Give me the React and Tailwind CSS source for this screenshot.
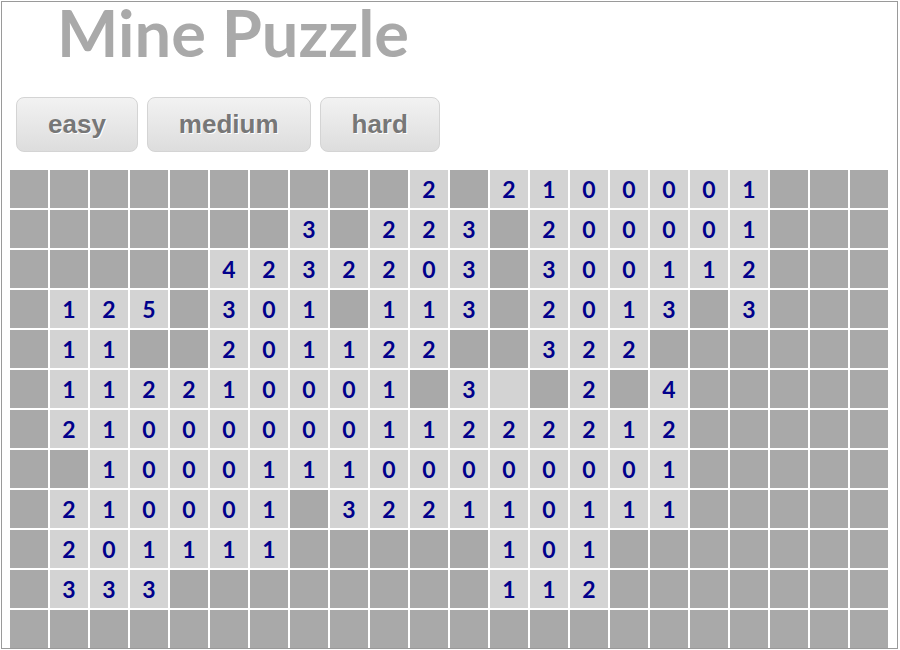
import React from "react";

// '#' = unopened (dark), '.' = opened blank, digit = opened with count
const board = [
  "##########2#2100001###",
  "#######3#223#200001###",
  "#####4232203#300112###",
  "#125#301#113#2013#3###",
  "#11##201122##322######",
  "#112210001#3.#2#4#####",
  "#2100000011222212#####",
  "##100011100000001#####",
  "#210001#322110111#####",
  "#201111#####101#######",
  "#333########112#######",
  "######################",
];

const levels = ["easy", "medium", "hard"];

function Cell({ v }) {
  if (v === "#") {
    return <div className="w-[38px] h-[38px] bg-[#a9a9a9]" />;
  }
  return (
    <div className="w-[38px] h-[38px] bg-[#d3d3d3] flex items-center justify-center text-[23px] font-bold text-[#00008b] leading-none">
      {v === "." ? "" : v}
    </div>
  );
}

export default function App() {
  return (
    <div className="w-[900px] h-[650px] bg-white overflow-hidden font-['Lato',sans-serif]">
      <div className="ml-px mt-px w-[897px] h-[648px] border border-[#9a9a9a] overflow-hidden">
        <h1 className="pl-[55px] text-[65px] leading-[60px] font-bold text-[#a9a9a9]">
          Mine Puzzle
        </h1>

        <div className="flex gap-[9px] ml-[14px] mt-[35px]">
          {levels.map((l) => (
            <button
              key={l}
              className="h-[55px] px-[31px] rounded-[8px] border border-[#d4d4d4] bg-linear-to-b from-[#f2f2f2] to-[#dddddd] text-[26px] font-bold text-[#777] font-['Liberation_Sans',Arial,sans-serif] [text-shadow:1px_1px_0_#fff]"
            >
              {l}
            </button>
          ))}
        </div>

        <div className="mt-[18px] ml-[8px] flex flex-col gap-[2px]">
          {board.map((row, r) => (
            <div key={r} className="flex gap-[2px]">
              {row.split("").map((v, c) => (
                <Cell key={c} v={v} />
              ))}
            </div>
          ))}
        </div>
      </div>
    </div>
  );
}
